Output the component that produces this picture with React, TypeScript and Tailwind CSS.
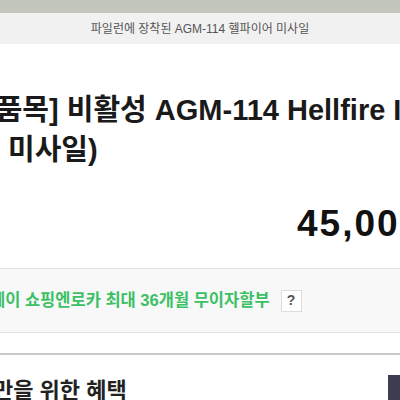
import React from "react";

export default function App() {
  const font = { fontFamily: '"Liberation Sans", "Noto Sans CJK KR", sans-serif' };
  return (
    <div className="w-[400px] h-[400px] overflow-hidden bg-white relative" style={font}>
      <div className="h-[13px] bg-[#c2c6bd]" />
      <div className="h-[31px] bg-[#f1f1f1] flex items-center justify-center text-[12px] text-[#555]">
        파일런에 장착된 AGM-114 헬파이어 미사일
      </div>
      <div className="pt-[46px] pl-[8px] whitespace-nowrap">
        <div className="text-[29px] font-bold text-[#1a1a1a] leading-[40px] ml-[-22px]">
          [품목] 비활성 AGM-114 Hellfire II
        </div>
        <div className="text-[29px] font-bold text-[#1a1a1a] leading-[40px]">미사일)</div>
      </div>
      <div className="flex mt-[30px] pl-[297px] whitespace-nowrap">
        <div className="text-[37px] font-bold tracking-[2px] text-[#111] leading-[48px]">45,000</div>
      </div>
      <div className="mt-[20px] border-t border-[#e2e2e2] bg-[#f8f8f8] h-[64px] flex items-center whitespace-nowrap">
        <span className="text-[16.5px] font-bold text-[#3cc065] ml-[-10px]">페이 쇼핑엔로카 최대 36개월 무이자할부</span>
        <span className="ml-[11px] w-[21px] h-[22px] border border-[#ddd] bg-white flex items-center justify-center text-[14px] font-bold text-[#555]">?</span>
      </div>
      <div className="border-t border-[#e2e2e2] h-[21px]" />
      <div className="border-t-[2px] border-[#c8c8c8] flex justify-between items-start pt-[20px]">
        <div className="text-[22px] font-bold text-[#222] ml-[-7px] mt-[2px] leading-[28px] whitespace-nowrap">만을 위한 혜택</div>
        <div className="w-[12px] h-[30px] bg-[#3d3d52]" />
      </div>
    </div>
  );
}
